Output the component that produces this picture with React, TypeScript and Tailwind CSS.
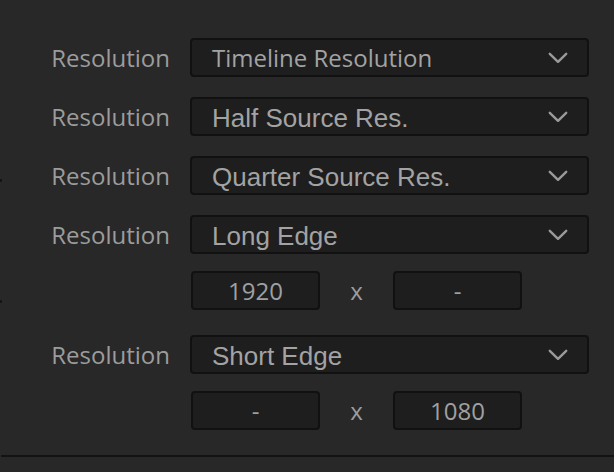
import React from "react";

const Chevron = () => (
  <svg width="20" height="12" viewBox="0 0 20 12" className="shrink-0">
    <polyline points="1.8,1.8 10,9.8 18.2,1.8" fill="none" stroke="#9a9a9a" strokeWidth="2.4" strokeLinecap="round" strokeLinejoin="round" />
  </svg>
);

const Label = ({ text }: { text: string }) => (
  <div className="w-[190px] shrink-0 pr-[20px] text-right text-[24px] leading-none text-[#9c9c9c] [font-family:'Open_Sans',sans-serif]">
    {text}
  </div>
);

const Dropdown = ({ value, sans }: { value: string; sans?: boolean }) => (
  <div className="flex h-[39px] w-[399px] items-center justify-between rounded-[4px] border-2 border-[#111111] bg-[#1e1e1e] pl-[20px] pr-[19px]">
    {sans ? (
      <span className="text-[24px] leading-none text-[#a3a3a3] [font-family:'Open_Sans',sans-serif]">{value}</span>
    ) : (
      <span className="mt-[3px] text-[26px] leading-none text-[#a3a3a3] [font-family:'Liberation_Sans',Arial,sans-serif]">{value}</span>
    )}
    <Chevron />
  </div>
);

const Row = ({ value, sans, className }: { value: string; sans?: boolean; className?: string }) => (
  <div className={"flex items-center " + (className ?? "")}>
    <Label text="Resolution" />
    <Dropdown value={value} sans={sans} />
  </div>
);

const Box = ({ value }: { value: string }) => (
  <div className="flex h-[39px] w-[129px] items-center justify-center rounded-[4px] border-2 border-[#111111] bg-[#1e1e1e] text-[24px] leading-none text-[#a0a0a0] [font-family:'Open_Sans',sans-serif]">
    {value}
  </div>
);

const Dims = ({ a, b, className }: { a: string; b: string; className?: string }) => (
  <div className={"flex items-center pl-[191px] " + (className ?? "")}>
    <Box value={a} />
    <div className="w-[73px] text-center text-[24px] leading-none text-[#9c9c9c] [font-family:'Open_Sans',sans-serif]">x</div>
    <Box value={b} />
  </div>
);

export default function App() {
  return (
    <div className="relative h-[472px] w-[614px] overflow-hidden bg-[#282828]">
      <div className="flex flex-col pt-[38px]">
        <Row value="Timeline Resolution" sans />
        <Row value="Half Source Res." className="mt-[20px]" />
        <Row value="Quarter Source Res." className="mt-[20px]" />
        <Row value="Long Edge" className="mt-[20px]" />
        <Dims a="1920" b="-" className="mt-[17px]" />
        <Row value="Short Edge" className="mt-[25px]" />
        <Dims a="-" b="1080" className="mt-[17px]" />
        <div className="ml-[1px] mt-[25px] h-[2px] bg-[#131313]" />
      </div>
      <div className="absolute left-0 top-[179px] h-[3px] w-[2px] bg-[#151515]" />
      <div className="absolute left-0 top-[300px] h-[3px] w-[2px] bg-[#151515]" />
    </div>
  );
}
